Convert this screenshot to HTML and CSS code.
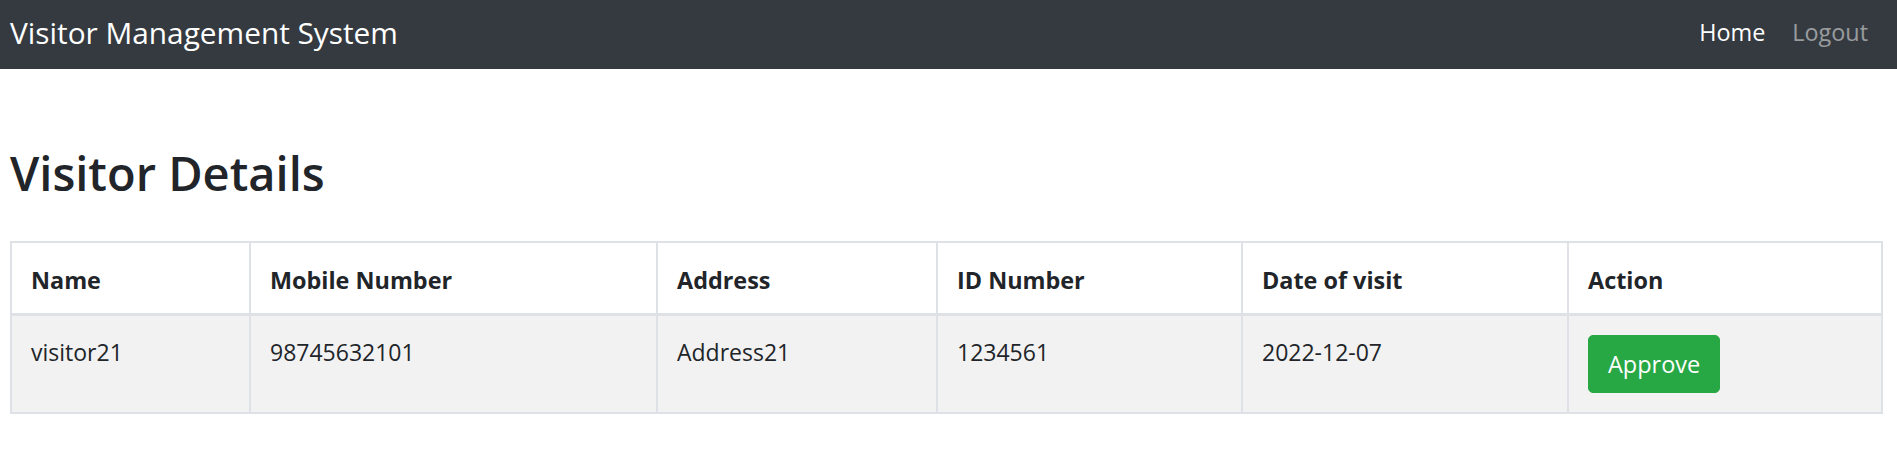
FILE: index.html
```html
<!DOCTYPE html>
<html lang="en">
<head>
<meta charset="utf-8">
<title>Visitor Management System</title>
<link rel="stylesheet" href="styles.css">
</head>
<body>
<nav class="navbar">
  <a class="brand" href="#">Visitor Management System</a>
  <div class="nav-links">
    <a class="nav-link active" href="#">Home</a>
    <a class="nav-link muted" href="#">Logout</a>
  </div>
</nav>
<main class="content">
  <h1 class="title">Visitor Details</h1>
  <table class="table">
    <colgroup>
      <col class="c1"><col class="c2"><col class="c3"><col class="c4"><col class="c5"><col class="c6">
    </colgroup>
    <thead>
      <tr>
        <th>Name</th>
        <th>Mobile Number</th>
        <th>Address</th>
        <th>ID Number</th>
        <th>Date of visit</th>
        <th>Action</th>
      </tr>
    </thead>
    <tbody>
      <tr class="striped">
        <td>visitor21</td>
        <td>98745632101</td>
        <td>Address21</td>
        <td>1234561</td>
        <td>2022-12-07</td>
        <td><button class="btn-approve" type="button">Approve</button></td>
      </tr>
    </tbody>
  </table>
</main>
</body>
</html>
```
FILE: styles.css
```css
* { box-sizing: border-box; }
html, body { margin: 0; padding: 0; }
body {
  font-family: "Open Sans", "Noto Sans", sans-serif;
  color: #212529;
  background: #fff;
}
.navbar {
  height: 69px;
  background: #343a40;
  display: flex;
  align-items: center;
  justify-content: space-between;
  padding: 0 29px 0 10px;
}
.brand {
  color: #fff;
  text-decoration: none;
  font-size: 29.8px;
  line-height: 1;
  padding-bottom: 4px;
}
.nav-links {
  display: flex;
  gap: 27px;
  padding-bottom: 4px;
}
.nav-link {
  text-decoration: none;
  font-size: 23.4px;
  line-height: 1;
}
.nav-link.active { color: #fff; }
.nav-link.muted { color: rgba(255, 255, 255, 0.5); }
.content {
  padding: 0 14px 0 10px;
}
.title {
  font-size: 47px;
  font-weight: 560;
  line-height: 57.6px;
  margin: 76px 0 38px 0;
}
.table {
  width: 100%;
  border-collapse: collapse;
  table-layout: fixed;
  border: 2px solid #dee2e6;
}
.c1 { width: 239px; }
.c2 { width: 407px; }
.c3 { width: 280px; }
.c4 { width: 305px; }
.c5 { width: 326px; }
.c6 { width: auto; }
.table th, .table td {
  border: 2px solid #dee2e6;
  text-align: left;
  vertical-align: top;
}
.table th {
  font-size: 23.4px;
  font-weight: 700;
  line-height: 30px;
  padding: 22px 19px 18px 19px;
  border-bottom-width: 3px;
}
.table td {
  font-size: 23px;
  line-height: 34.5px;
  padding: 19px 19px 19px 19px;
}
.striped { background: #f2f2f2; }
.btn-approve {
  font-family: inherit;
  font-size: 23.5px;
  line-height: 34.5px;
  color: #fff;
  background: #28a745;
  border: 1px solid #28a745;
  border-radius: 5px;
  padding: 11px 19px;
  margin: 0;
  cursor: pointer;
}
```
